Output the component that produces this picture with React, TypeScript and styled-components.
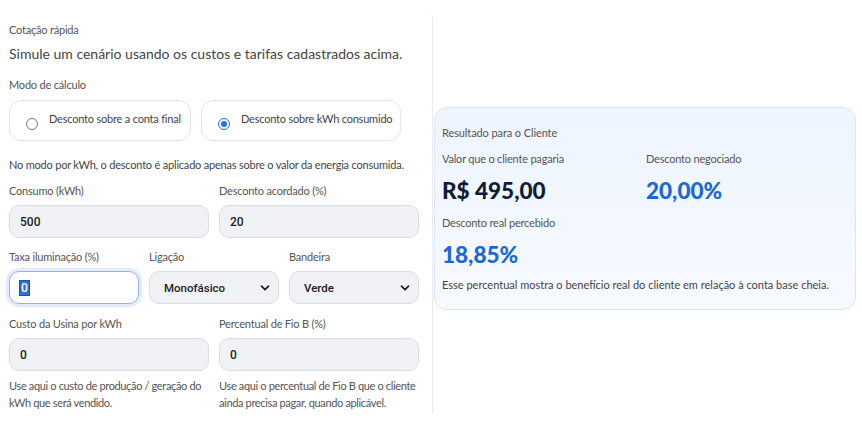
import React from 'react';
import styled, { createGlobalStyle } from 'styled-components';

const GlobalStyle = createGlobalStyle`
  html, body {
    margin: 0;
    padding: 0;
    background: #ffffff;
  }
  body {
    font-family: Lato, "Noto Sans", sans-serif;
    color: #333;
  }
`;

const Page = styled.div`
  display: flex;
  align-items: flex-start;
  width: 862px;
  height: 437px;
  overflow: hidden;
`;

const FormPanel = styled.section`
  width: 410px;
  height: 392px;
  margin-top: 12px;
  padding: 10px 13px 0 9px;
  border-right: 1px solid #ebebee;
  border-top-right-radius: 6px;
  box-sizing: content-box;
  display: flex;
  flex-direction: column;
  letter-spacing: -0.2px;
`;

const Eyebrow = styled.span`
  font-size: 11px;
  color: #555;
  line-height: 16px;
`;

const Lead = styled.p`
  margin: 6px 0 0;
  font-size: 14px;
  line-height: 20px;
  color: #444;
  letter-spacing: 0;
  white-space: nowrap;
`;

const SectionLabel = styled.span`
  margin-top: 13px;
  font-size: 11px;
  line-height: 16px;
  color: #555;
`;

const ModeRow = styled.div`
  display: flex;
  gap: 10px;
  margin-top: 7px;
`;

const ModeCard = styled.label<{ $width: number }>`
  width: ${(p) => p.$width}px;
  height: 41px;
  box-sizing: border-box;
  border: 1px solid #e3e4e8;
  border-radius: 12px;
  display: flex;
  align-items: center;
  gap: 11px;
  padding: 0 0 0 16px;
  font-size: 11px;
  color: #444;
  white-space: nowrap;
  cursor: pointer;
`;

const RadioDot = styled.span<{ $checked?: boolean }>`
  width: 12px;
  height: 12px;
  box-sizing: border-box;
  border-radius: 50%;
  margin-top: 6px;
  border: ${(p) => (p.$checked ? '1px solid #1a73e8' : '1px solid #777')};
  background: #fff;
  display: flex;
  align-items: center;
  justify-content: center;
  flex-shrink: 0;

  &::after {
    content: '';
    display: ${(p) => (p.$checked ? 'block' : 'none')};
    width: 6px;
    height: 6px;
    border-radius: 50%;
    background: #1a73e8;
  }
`;

const ModeText = styled.span`
  margin-top: -4px;
`;

const Note = styled.p`
  margin: 16px 0 0;
  font-size: 11px;
  line-height: 16px;
  color: #444;
  white-space: nowrap;
`;

const Grid = styled.div<{ $cols: string; $top: number }>`
  display: grid;
  grid-template-columns: ${(p) => p.$cols};
  column-gap: 10px;
  margin-top: ${(p) => p.$top}px;
`;

const Field = styled.div`
  display: flex;
  flex-direction: column;
`;

const FieldLabel = styled.span`
  font-size: 11px;
  line-height: 16px;
  color: #555;
  margin-bottom: 6px;
`;

const TextInput = styled.div<{ $focused?: boolean }>`
  height: 33px;
  box-sizing: border-box;
  border-radius: 10px;
  border: 1px solid ${(p) => (p.$focused ? '#8fb3f5' : '#dcdde2')};
  background: ${(p) => (p.$focused ? '#ffffff' : '#f1f2f6')};
  box-shadow: ${(p) => (p.$focused ? '0 0 0 3px #e3ecfd' : 'none')};
  display: flex;
  align-items: center;
  padding: 0 10px;
  font-family: Roboto, "Noto Sans", sans-serif;
  font-weight: 500;
  font-size: 12px;
  letter-spacing: 0;
  color: #222;
`;

const Selected = styled.span`
  background: #2f6fde;
  color: #fff;
  outline: 1px solid #1b4fb0;
  padding: 0 1px;
  line-height: 14px;
`;

const SelectBox = styled.div`
  height: 33px;
  box-sizing: border-box;
  border-radius: 10px;
  border: 1px solid #dcdde2;
  background: #f1f2f6;
  display: flex;
  align-items: center;
  justify-content: space-between;
  padding: 0 8px 0 14px;
  font-family: Roboto, "Noto Sans", sans-serif;
  font-weight: 500;
  font-size: 11.5px;
  letter-spacing: 0;
  color: #222;
`;

const Help = styled.p`
  margin: 6px 0 0;
  font-size: 11px;
  line-height: 17px;
  color: #555;
  letter-spacing: -0.35px;
`;

const ResultColumn = styled.div`
  padding-top: 107px;
  padding-left: 1px;
`;

const ResultCard = styled.section`
  width: 422px;
  height: 203px;
  box-sizing: border-box;
  border: 1px solid #d8e5fa;
  border-radius: 13px;
  background: linear-gradient(180deg, #eef5ff 0%, #f7faff 100%);
  padding: 17px 8px 0 7px;
  display: flex;
  flex-direction: column;
`;

const ResultTitle = styled.span`
  font-size: 11px;
  line-height: 16px;
  color: #555;
  letter-spacing: -0.1px;
`;

const Stats = styled.div`
  display: grid;
  grid-template-columns: 204px 1fr;
  margin-top: 10px;
  row-gap: 11px;
`;

const Stat = styled.div`
  display: flex;
  flex-direction: column;
`;

const StatLabel = styled.span`
  font-size: 11px;
  line-height: 16px;
  color: #555;
  letter-spacing: -0.2px;
`;

const StatValue = styled.span<{ $accent?: boolean }>`
  margin-top: 11px;
  font-family: Lato, "Noto Sans", sans-serif;
  font-weight: 900;
  font-size: 22.5px;
  line-height: 26px;
  color: ${(p) => (p.$accent ? '#1a68d6' : '#0f1d38')};
`;

const ResultNote = styled.p`
  margin: 9px 0 0;
  font-size: 11px;
  line-height: 16px;
  color: #444;
  white-space: nowrap;
`;

const Chevron = () => (
  <svg width="10" height="10" viewBox="0 0 10 10" aria-hidden="true">
    <path d="M1.5 3.2 L5 6.7 L8.5 3.2" fill="none" stroke="#222" strokeWidth="1.8" strokeLinecap="round" strokeLinejoin="round" />
  </svg>
);

const App: React.FC = () => {
  return (
    <Page>
      <GlobalStyle />
      <FormPanel>
        <Eyebrow>Cotação rápida</Eyebrow>
        <Lead>Simule um cenário usando os custos e tarifas cadastrados acima.</Lead>
        <SectionLabel>Modo de cálculo</SectionLabel>
        <ModeRow>
          <ModeCard $width={182}>
            <RadioDot />
            <ModeText>Desconto sobre a conta final</ModeText>
          </ModeCard>
          <ModeCard $width={200}>
            <RadioDot $checked />
            <ModeText>Desconto sobre kWh consumido</ModeText>
          </ModeCard>
        </ModeRow>
        <Note>No modo por kWh, o desconto é aplicado apenas sobre o valor da energia consumida.</Note>

        <Grid $cols="1fr 1fr" $top={10}>
          <Field>
            <FieldLabel>Consumo (kWh)</FieldLabel>
            <TextInput>500</TextInput>
          </Field>
          <Field>
            <FieldLabel>Desconto acordado (%)</FieldLabel>
            <TextInput>20</TextInput>
          </Field>
        </Grid>

        <Grid $cols="1fr 1fr 1fr" $top={11}>
          <Field>
            <FieldLabel>Taxa iluminação (%)</FieldLabel>
            <TextInput $focused>
              <Selected>0</Selected>
            </TextInput>
          </Field>
          <Field>
            <FieldLabel>Ligação</FieldLabel>
            <SelectBox>
              Monofásico
              <Chevron />
            </SelectBox>
          </Field>
          <Field>
            <FieldLabel>Bandeira</FieldLabel>
            <SelectBox>
              Verde
              <Chevron />
            </SelectBox>
          </Field>
        </Grid>

        <Grid $cols="1fr 1fr" $top={12}>
          <Field>
            <FieldLabel>Custo da Usina por kWh</FieldLabel>
            <TextInput>0</TextInput>
            <Help>Use aqui o custo de produção / geração do kWh que será vendido.</Help>
          </Field>
          <Field>
            <FieldLabel>Percentual de Fio B (%)</FieldLabel>
            <TextInput>0</TextInput>
            <Help>Use aqui o percentual de Fio B que o cliente ainda precisa pagar, quando aplicável.</Help>
          </Field>
        </Grid>
      </FormPanel>

      <ResultColumn>
        <ResultCard>
          <ResultTitle>Resultado para o Cliente</ResultTitle>
          <Stats>
            <Stat>
              <StatLabel>Valor que o cliente pagaria</StatLabel>
              <StatValue>R$ 495,00</StatValue>
            </Stat>
            <Stat>
              <StatLabel>Desconto negociado</StatLabel>
              <StatValue $accent>20,00%</StatValue>
            </Stat>
            <Stat>
              <StatLabel>Desconto real percebido</StatLabel>
              <StatValue $accent>18,85%</StatValue>
            </Stat>
          </Stats>
          <ResultNote>Esse percentual mostra o benefício real do cliente em relação à conta base cheia.</ResultNote>
        </ResultCard>
      </ResultColumn>
    </Page>
  );
};

export default App;
